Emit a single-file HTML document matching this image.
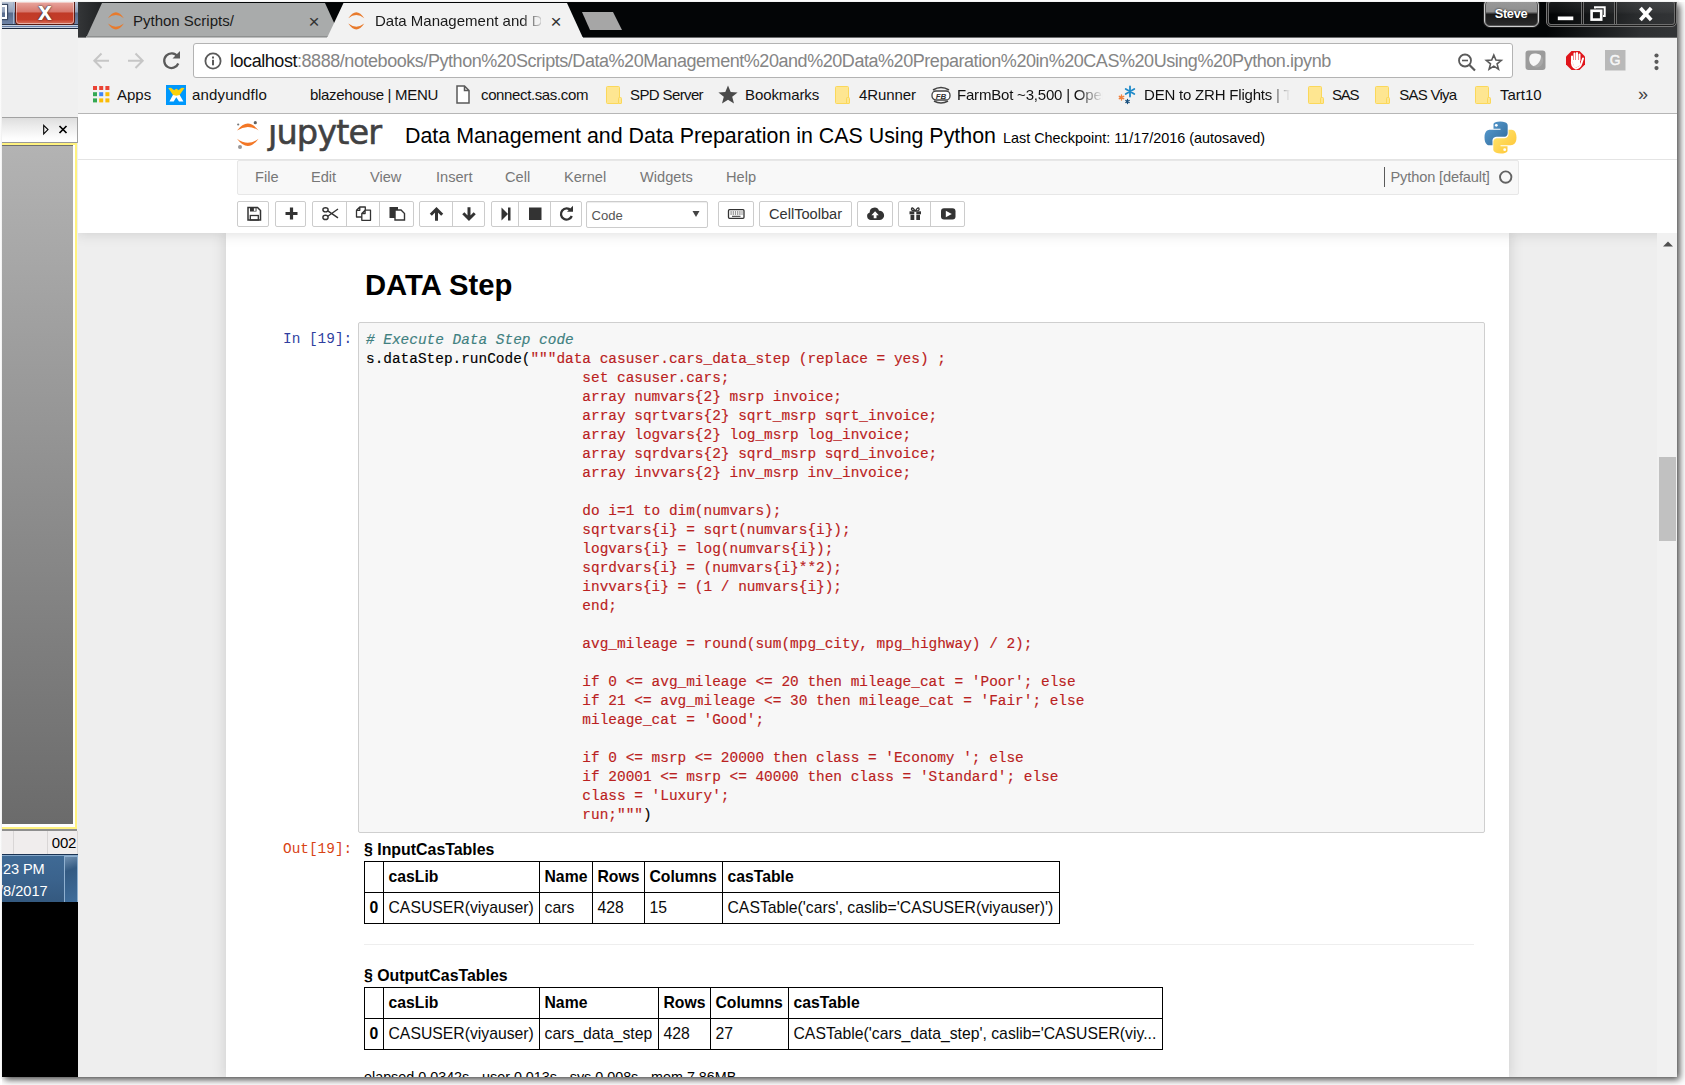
<!DOCTYPE html>
<html>
<head>
<meta charset="utf-8">
<title>Data Management and Data Preparation in CAS Using Python</title>
<style>
html,body{margin:0;padding:0;}
body{width:1685px;height:1085px;overflow:hidden;background:#fff;position:relative;font-family:"Liberation Sans",sans-serif;}
.abs{position:absolute;}
#frame{left:2px;top:2px;width:1675px;height:1075px;box-shadow:2px 2px 7px .5px rgba(0,0,0,.75);clip-path:inset(0 -10px -10px 0);background:#fff;}
/* left window */
#lw{left:2px;top:2px;width:76px;height:1075px;background:#f0f0f0;overflow:hidden;}
#lw-title{left:0;top:0;width:76px;height:26px;background:linear-gradient(#b9c3d3 0,#93a2bb 10px,#586b8b 11px,#6e83a6 22px,#2a3346 22px,#2a3346 23px,#c5d0e0 23px,#c5d0e0 24px,#6a82aa 24px,#6a82aa 25px,#c5d0e0 25px,#c5d0e0 26px);border-bottom:1px solid #1a2840;}
#lw-close{left:13px;top:0;width:58px;height:22px;border:1px solid #5b1a12;border-top:none;border-radius:0 0 4px 4px;background:linear-gradient(#e9a79f 0%,#d6766b 45%,#c03a27 50%,#c43c28 80%,#d9735f 100%);box-shadow:inset 0 0 0 1px rgba(255,255,255,.45);}
#lw-close span{left:0;width:58px;top:-5.500px;text-align:center;color:#fff;font:bold 25px "Liberation Sans",sans-serif;text-shadow:0 0 2px #333,0 0 1px #333;}
#lw-panelhead{left:0;top:115px;width:75px;height:24px;background:linear-gradient(#dedede,#ececec 35%,#fdfdfd 85%,#fff);border-top:1px solid #a2a2a2;border-right:1px solid #a2a2a2;border-bottom:1px solid #9a9a9a;}
#lw-pane{left:0;top:141px;width:75px;height:686px;background:#fff;border-bottom:2px solid #8f8f8f;}
#lw-pane b{position:absolute;left:0;top:0;width:73px;height:682px;border:2px solid #fff27f;border-left:none;}
#lw-pane i{position:absolute;left:0;top:1.500px;width:71px;height:678.500px;background:linear-gradient(#b3b3b3,#6b6b6b);border-top:1.500px solid #6e6e6e;}
#lw-num{left:0;top:829px;width:76px;height:23px;background:#f0eded;font-size:15px;color:#000;}
#lw-num i{position:absolute;top:0;width:1px;height:23px;background:#d9d6d6;}
#lw-task{left:0;top:852px;width:76px;height:48px;background:linear-gradient(#3f6a95,#3b638d 50%,#34597f);border-top:1.500px solid #1b3352;box-shadow:inset 0 1px 0 #86a8c9;color:#fff;font-size:14.600px;}
#lw-task i{position:absolute;left:62px;top:1px;width:12px;height:45px;border:1px solid #8fb0d0;background:linear-gradient(160deg,#6f8fb0 0%,#335a82 30%,#3f6d9b 100%);}
#lw-black{left:0;top:900px;width:76px;height:175px;background:#000;}
/* chrome */
#ch{left:78px;top:2px;width:1599px;height:1075px;background:#fff;overflow:hidden;}
#ch-title{left:0;top:0;width:1599px;height:36px;background:#030506;}
#ch-tool{left:0;top:35px;width:1599px;height:76px;background:#f2f2f2;border-bottom:1px solid #b6b6b6;}
.ui{font-family:"Liberation Sans",sans-serif;color:#111;white-space:nowrap;}

/* chrome titlebar */
#ch-title svg{position:absolute;left:0;top:0;}
.tabt{top:8.300px;font-size:15px;color:#1a1a1a;white-space:nowrap;overflow:hidden;height:22px;line-height:22px;}
.tabx{top:9px;font-size:19px;color:#333;line-height:22px;width:14px;text-align:center;}
#steve{left:1405.500px;top:-3px;width:53px;height:26px;border:1px solid #cfcfcf;border-radius:6px;background:linear-gradient(#9a9a9a 0%,#8f8f8f 45%,#1a1a1a 55%,#2b2b2b 100%);box-shadow:0 0 0 1px #222, inset 0 0 0 1px #555;color:#fff;font:bold 12.800px "Liberation Sans",sans-serif;text-align:center;line-height:27.200px;letter-spacing:-.3px;text-shadow:0 0 2px #000;}
#wc{left:1468px;top:-3px;width:129px;height:25.500px;border:1px solid #777;border-radius:5px;background:linear-gradient(rgba(255,255,255,.1) 0%,rgba(255,255,255,.04) 45%,rgba(255,255,255,0) 55%);box-shadow:inset 0 0 0 1px rgba(20,20,20,.9),inset 0 0 0 2px #6e6e6e;}
#wc i{position:absolute;top:0;width:3px;height:24px;background:linear-gradient(90deg,#6e6e6e 1px,#161616 1px,#161616 2px,#6e6e6e 2px);}
/* toolbar */
#urlbox{left:115px;top:6px;width:1318px;height:33px;border:1px solid #b3b3b3;border-radius:3px;background:#fff;}
#url{left:36px;top:1.400px;line-height:33px;font-size:18px;letter-spacing:-.45px;color:#858585;white-space:nowrap;}
#url b{font-weight:normal;color:#111;}
.bm{top:46px;height:24px;line-height:24px;font-size:15px;color:#111;white-space:nowrap;}
.fold{position:absolute;top:49px;left:0;width:12px;height:15.500px;background:#fee691;border:1.300px solid #fbd85a;border-radius:1.500px;margin-left:-1.200px;}
.fold:after{content:"";position:absolute;left:10.300px;top:9.800px;width:2px;height:5.500px;background:#fee691;border:1.200px solid #fbd85a;border-radius:1.500px 1.500px 1px 1px;}

/* jupyter header : coordinates relative to #page (abs x-78, abs y-114) */
#logo-t{left:190px;top:-.800px;font-family:"DejaVu Sans",sans-serif;font-size:33.600px;letter-spacing:-.9px;color:#414142;line-height:40px;-webkit-text-stroke:.55px #414142;}
#nbname{left:327px;top:8px;font-size:21.400px;line-height:28px;color:#000;white-space:nowrap;}
#ckpt{left:925px;top:12px;font-size:14.400px;line-height:24px;color:#000;white-space:nowrap;}
#menubar{left:159px;top:46px;width:1280px;height:33px;background:#f8f8f8;border:1px solid #e7e7e7;border-radius:2px;}
#menubar span{position:absolute;top:0;line-height:33px;font-size:14.625px;color:#777;}
#kern{position:absolute;left:1145.900px;top:6px;width:1px;height:20px;background:#5a5a5a;}
.tb{position:absolute;top:87px;height:24px;border:1px solid #ccc;border-radius:2px;background:#fff;}
.tb i{position:absolute;top:0;width:1px;height:24px;background:#ccc;}
.tb svg{position:absolute;top:0;}

/* notebook: coords relative to #nbc (abs x-226, abs y-233) */
#h1{left:139px;top:32px;font-size:29.250px;font-weight:bold;line-height:40px;color:#000;white-space:nowrap;}
.prompt{font-family:"Liberation Mono",monospace;font-size:14.430px;line-height:19.100px;white-space:pre;}
#inp{left:132px;top:89px;width:1125px;height:509px;border:1px solid #cfcfcf;border-radius:2px;background:#f7f7f7;}
#code{left:7px;top:7.700px;margin:0;font-family:"Liberation Mono",monospace;font-size:14.430px;line-height:19px;color:#000;white-space:pre;-webkit-text-stroke-width:.15px;}
#code .s{color:#ba2121;} #code .c{color:#408080;font-style:italic;}
.oh{left:138px;font-size:15.900px;font-weight:bold;line-height:22px;color:#000;white-space:nowrap;}
table.df{position:absolute;left:138px;border-collapse:collapse;table-layout:fixed;font-size:15.750px;color:#000;}
table.df td,table.df th{border:1px solid #000;padding:0 0 0 4.500px;height:30px;line-height:30px;text-align:left;white-space:nowrap;overflow:hidden;box-sizing:border-box;}
table.df td{font-weight:normal;color:#0a0a0a;}
/* page */
#page{left:0;top:112px;width:1599px;height:963px;background:#fff;overflow:hidden;}
#sb{left:1579px;top:231px;width:20px;height:844px;background:#f1f1f1;}
#site{left:0;top:119px;width:1579px;height:844px;background:#eee;}
#nbc{left:148px;top:0;width:1283px;height:844px;background:#fff;box-shadow:0 0 12px 1px rgba(87,87,87,.2);}
#hdr{left:0;top:0;width:1599px;height:119px;background:#fff;box-shadow:0 0 12px 1px rgba(87,87,87,.2);}
</style>
</head>
<body>
<div class="abs" style="left:0;top:0;width:1679px;height:2px;background:linear-gradient(#fff,#f0f0f0)"></div><div class="abs" style="left:0;top:0;width:2px;height:1079px;background:linear-gradient(90deg,#fff,#eee)"></div>
<div id="frame" class="abs"></div>

<!-- left background window -->
<div id="lw" class="abs">
  <div id="lw-title" class="abs"><div class="abs" style="left:-7px;top:3px;width:8px;height:10px;border:2px solid #fff;box-shadow:0 0 1px 1px #3b4a63"></div><div class="abs" style="left:11px;top:0;width:1px;height:22px;background:#9fb1cb"></div><div id="lw-close" class="abs"><span class="abs">x</span></div></div>
  <div id="lw-panelhead" class="abs"><svg class="abs" style="left:38px;top:4px" width="30" height="14" viewBox="40 122 30 14"><path d="M43.700,125.300 L48,129.600 L43.700,133.900Z" fill="none" stroke="#000" stroke-width="1.100"/><path d="M59.500,126 L66.500,133 M66.500,126 L59.500,133" stroke="#000" stroke-width="1.700"/></svg></div>
  <div id="lw-pane" class="abs"><b></b><i></i></div>
  <div id="lw-num" class="abs"><i style="left:11px"></i><i style="left:45px"></i><i style="left:75px"></i><span class="abs" style="right:2px;top:3px;letter-spacing:-.3px">002</span></div>
  <div id="lw-task" class="abs"><span class="abs" style="left:-3px;top:6px;letter-spacing:-.1px">:23 PM</span><span class="abs" style="left:-3px;top:28px">/8/2017</span><i></i></div>
  <div id="lw-black" class="abs"></div>
</div>

<!-- chrome window -->
<div id="ch" class="abs">
  <div id="ch-title" class="abs">
    <svg width="1599" height="36" viewBox="0 0 1599 36">
      <defs><linearGradient id="tg" x1="0" y1="0" x2="1" y2="0"><stop offset="0" stop-color="#343638"/><stop offset="1" stop-color="#030506"/></linearGradient></defs>
      <rect x="0" y="0" width="60" height="36" fill="url(#tg)"/>
      <linearGradient id="tg2" gradientUnits="userSpaceOnUse" x1="1480" y1="0" x2="1590" y2="40"><stop offset="0" stop-color="#030506"/><stop offset=".75" stop-color="#2e3032"/><stop offset="1" stop-color="#323436"/></linearGradient>
      <rect x="1440" y="0" width="159" height="36" fill="url(#tg2)"/>
      <polygon points="8,36 24,1 247,1 263,36" fill="#a9abab"/>
      <rect x="8" y="34" width="255" height="2" fill="#8e9090"/>
      <polygon points="504,10 535,10 544,28 512,28" fill="#a6a6a6"/>
      <polygon points="249,36 265.500,1 489,1 505,36" fill="#f2f2f2"/>
      <g fill="#e87a2c">
        <path d="M29.900,16.200 Q37.900,4.200 45.900,16.200 Q37.900,9.800 29.900,16.200Z"/><path d="M29.900,21.600 Q37.900,33.400 45.900,21.600 Q37.900,27.800 29.900,21.600Z"/>
        <path d="M270.300,16.200 Q278.300,4.200 286.300,16.200 Q278.300,9.800 270.300,16.200Z"/><path d="M270.300,21.600 Q278.300,33.400 286.300,21.600 Q278.300,27.800 270.300,21.600Z"/>
      </g>
    </svg>
    <div class="abs tabt ui" style="left:55px;width:150px">Python Scripts/</div>
    <div class="abs tabx" style="left:229px">×</div>
    <div class="abs tabt ui" style="left:297px;width:166px;-webkit-mask-image:linear-gradient(90deg,#000 146px,transparent 170px);mask-image:linear-gradient(90deg,#000 146px,transparent 170px)">Data Management and Da</div>
    <div class="abs tabx" style="left:471px">×</div>
    <div id="steve" class="abs">Steve</div>
    <div id="wc" class="abs"><i style="left:34px"></i><i style="left:67px"></i>
      <svg width="129" height="25" viewBox="0 0 129 25" style="position:absolute;left:-1.200px;top:0">
        <rect x="11.800" y="16.500" width="15.500" height="3.700" fill="#fff"/>
        <rect x="45.600" y="10.800" width="9.600" height="8.800" fill="none" stroke="#fff" stroke-width="2.600"/>
        <path d="M49,8.500 V7.200 H58.700 V16 H57" fill="none" stroke="#fff" stroke-width="2"/>
        <path d="M94.400,7.900 L105.200,20 M105.200,7.900 L94.400,20" stroke="#fff" stroke-width="3.700"/>
      </svg>
    </div>
  </div>
  <div id="ch-tool" class="abs"><div class="abs" style="left:0;top:0;width:8px;height:1px;background:#7b7c7d"></div><div class="abs" style="left:8px;top:0;width:241px;height:1px;background:#bcbdbd"></div><div class="abs" style="left:505px;top:0;width:1094px;height:1px;background:#6b6c6d"></div>
    <svg class="abs" style="left:0;top:0" width="1599" height="76" viewBox="78 37 1599 76">
      <g fill="none" stroke="#c6c6c6" stroke-width="2">
        <path d="M109,60.700 H94.500 M101.500,53.500 L94.300,60.700 L101.500,68"/>
        <path d="M128,60.700 H142.500 M135.500,53.500 L142.700,60.700 L135.500,68"/>
      </g>
      <path d="M177.500,56.500 A7.300,7.300 0 1 0 178.300,63.500" fill="none" stroke="#5a5a5a" stroke-width="2.3"/>
      <polygon points="172.500,58.500 180,58.500 180,51" fill="#5a5a5a"/>
    </svg>
    <div id="urlbox" class="abs">
      <svg class="abs" style="left:9px;top:7px" width="20" height="20" viewBox="0 0 20 20"><circle cx="10" cy="10" r="7.600" fill="none" stroke="#5a5a5a" stroke-width="1.800"/><rect x="9" y="8.800" width="2" height="5.500" fill="#5a5a5a"/><rect x="9" y="5.500" width="2" height="2" fill="#5a5a5a"/></svg>
      <div id="url" class="abs ui"><b>localhost</b>:8888/notebooks/Python%20Scripts/Data%20Management%20and%20Data%20Preparation%20in%20CAS%20Using%20Python.ipynb</div>
      <svg class="abs" style="left:1260px;top:5px" width="50" height="24" viewBox="1454 48 50 24">
        <circle cx="1465" cy="59.500" r="6" fill="none" stroke="#5a5a5a" stroke-width="1.800"/><path d="M1469.500,64 L1475,69.500" stroke="#5a5a5a" stroke-width="2.200"/><path d="M1462,59.500 H1468" stroke="#5a5a5a" stroke-width="1.600"/>
        <polygon points="1493.800,54 1495.900,59 1501.300,59.400 1497.100,62.900 1498.500,68.200 1493.800,65.200 1489.100,68.200 1490.500,62.900 1486.300,59.400 1491.700,59" fill="none" stroke="#5a5a5a" stroke-width="1.600" stroke-linejoin="miter"/>
      </svg>
    </div>
    <svg class="abs" style="left:1440px;top:10px" width="150" height="26" viewBox="1518 47 150 26">
      <rect x="1525.500" y="50.500" width="20" height="19.500" rx="3" fill="#9b9b9b"/>
      <circle cx="1536.400" cy="60.600" r="6.800" fill="#a8a8a8"/>
      <path d="M1529.300,58 Q1530,53 1536,53.600 Q1540,54 1541,55.800 Q1541,61 1537.500,64 Q1535,66.200 1533.200,66 Q1528.500,63 1529.300,58Z" fill="#f6f6f6"/>
      <polygon points="1571.500,51 1579.500,51 1585,56.500 1585,64.500 1579.500,70 1571.500,70 1566,64.500 1566,56.500" fill="#e0151b"/>
      <path d="M1572,61 V56.500 M1574.500,60 V53.500 M1577,60 V53 M1579.500,60.500 V54.500 M1572,60 Q1571,67 1576,68.500 Q1580,68 1581.500,63 L1583,58.500" fill="none" stroke="#fff" stroke-width="2" stroke-linecap="round"/>
      <path d="M1572.500,60 H1580 V65 Q1577,68.500 1573.500,66.500Z" fill="#fff"/>
      <rect x="1605" y="50" width="20.500" height="20.500" fill="#b9b9b9"/>
      <text x="1615.100" y="65.400" font-family="Liberation Sans, sans-serif" font-size="13.800" fill="#f6f6f6" stroke="#f6f6f6" stroke-width=".5" text-anchor="middle">G</text>
      <circle cx="1656.500" cy="55.500" r="2.100" fill="#5a5a5a"/><circle cx="1656.500" cy="61.800" r="2.100" fill="#5a5a5a"/><circle cx="1656.500" cy="68.100" r="2.100" fill="#5a5a5a"/>
    </svg>
    <svg class="abs" style="left:15px;top:49px" width="17" height="17" viewBox="0 0 17 17">
      <g fill="#ea4335"><rect x="0" y="0" width="4" height="4"/><rect x="6.200" y="0" width="4" height="4"/><rect x="12.400" y="0" width="4" height="4"/></g>
      <rect x="0" y="6.200" width="4" height="4" fill="#34a853"/><rect x="6.200" y="6.200" width="4" height="4" fill="#4285f4"/><rect x="12.400" y="6.200" width="4" height="4" fill="#fbbc05"/>
      <rect x="0" y="12.400" width="4" height="4" fill="#34a853"/><rect x="6.200" y="12.400" width="4" height="4" fill="#fbbc05"/><rect x="12.400" y="12.400" width="4" height="4" fill="#fbbc05"/>
    </svg>
    <div class="abs bm ui" style="left:39px;">Apps</div>
    <svg class="abs" style="left:88px;top:48px" width="20" height="20" viewBox="0 0 20 20"><rect width="20" height="20" fill="#0098fc"/><path d="M7.200,9.600 L13.400,9.600 L17.400,16.600 L13,16.600 L10.300,12.200 L7.700,16.600 L3.400,16.600Z" fill="#fff"/><path d="M2.200,3 L5,2.800 L8.200,5.200 Q10.300,2.200 12.400,5.200 L15.600,2.800 L18.500,3 L13.600,10 L10.300,10.800 L7,10Z" fill="#fbd20c"/></svg>
    <div class="abs bm ui" style="left:114px;letter-spacing:.15px">andyundflo</div>
    <div class="abs bm ui" style="left:232px;letter-spacing:-.3px">blazehouse | MENU</div>
    <svg class="abs" style="left:378px;top:48px" width="14" height="19" viewBox="0 0 14 19"><path d="M1,1 H8.500 L13,5.500 V18 H1Z M8.500,1 V5.500 H13" fill="#fff" stroke="#5a5a5a" stroke-width="1.500"/></svg>
    <div class="abs bm ui" style="left:403px;letter-spacing:-.37px">connect.sas.com</div>
    <i class="fold" style="left:529.6px"></i><div class="abs bm ui" style="left:552px;letter-spacing:-.62px">SPD Server</div>
    <svg class="abs" style="left:640px;top:48px" width="20" height="19" viewBox="0 0 20 19"><polygon points="10,0.500 12.700,7 19.600,7.400 14.200,11.800 16,18.500 10,14.700 4,18.500 5.800,11.800 0.400,7.400 7.300,7" fill="#4a4a4a"/></svg>
    <div class="abs bm ui" style="left:667px;letter-spacing:-.1px">Bookmarks</div>
    <i class="fold" style="left:758.0px"></i><div class="abs bm ui" style="left:781px;letter-spacing:-.1px">4Runner</div>
    <svg class="abs" style="left:853px;top:48px" width="20" height="20" viewBox="0 0 20 20"><path d="M2,5 Q10,0 18,5" fill="none" stroke="#444" stroke-width="1.600"/><path d="M3,16 Q10,20 17,16" fill="none" stroke="#444" stroke-width="1.600"/><rect x="1" y="6" width="18" height="9" rx="4" fill="#fff" stroke="#444" stroke-width="1.300"/><text x="10" y="13.500" font-family="Liberation Sans, sans-serif" font-size="8" font-weight="bold" font-style="italic" fill="#333" text-anchor="middle">FB</text></svg>
    <div class="abs bm ui" style="left:879px;width:146px;overflow:hidden;letter-spacing:-.2px;-webkit-mask-image:linear-gradient(90deg,#000 120px,transparent 146px);mask-image:linear-gradient(90deg,#000 120px,transparent 146px)">FarmBot ~3,500 | Open</div>
    <svg class="abs" style="left:1039px;top:48px" width="20" height="20" viewBox="0 0 20 20"><g stroke="#1f8ac9" stroke-width="1.800" stroke-linecap="round"><path d="M13,1.500 V11.500 M8.700,4 L17.300,9 M17.300,4 L8.700,9"/></g><g stroke="#f0803c" stroke-width="1.400" stroke-linecap="round"><path d="M4.500,10 V15 M2.300,11.300 L6.700,13.700 M6.700,11.300 L2.300,13.700"/></g><g stroke="#19507d" stroke-width="1.300" stroke-linecap="round"><path d="M10.500,14.500 V18.500 M8.800,15.500 L12.200,17.500 M12.200,15.500 L8.800,17.500"/></g></svg>
    <div class="abs bm ui" style="left:1066px;width:148px;overflow:hidden;letter-spacing:-.2px;-webkit-mask-image:linear-gradient(90deg,#000 125px,transparent 146px);mask-image:linear-gradient(90deg,#000 125px,transparent 146px)">DEN to ZRH Flights | Th</div>
    <i class="fold" style="left:1231.5px"></i><div class="abs bm ui" style="left:1254px;letter-spacing:-1.2px">SAS</div>
    <i class="fold" style="left:1298.3px"></i><div class="abs bm ui" style="left:1321.3px;letter-spacing:-.75px">SAS Viya</div>
    <i class="fold" style="left:1398.5px"></i><div class="abs bm ui" style="left:1422px;">Tart10</div>
    <div class="abs bm ui" style="left:1560px;font-size:18px;top:45px;color:#444">»</div>
  </div>
  <div id="page" class="abs">
    <div id="site" class="abs"><div id="nbc" class="abs">
      <div id="h1" class="abs">DATA Step</div>
      <div class="abs prompt" style="left:57px;top:97.200px;color:#303f9f">In [19]:</div>
      <div id="inp" class="abs"><pre id="code" class="abs"><span class="c"># Execute Data Step code</span>
s.dataStep.runCode(<span class="s">"""data casuser.cars_data_step (replace = yes) ;
                         set casuser.cars;
                         array numvars{2} msrp invoice;
                         array sqrtvars{2} sqrt_msrp sqrt_invoice;
                         array logvars{2} log_msrp log_invoice;
                         array sqrdvars{2} sqrd_msrp sqrd_invoice;
                         array invvars{2} inv_msrp inv_invoice;

                         do i=1 to dim(numvars);
                         sqrtvars{i} = sqrt(numvars{i});
                         logvars{i} = log(numvars{i});
                         sqrdvars{i} = (numvars{i}**2);
                         invvars{i} = (1 / numvars{i});
                         end;

                         avg_mileage = round(sum(mpg_city, mpg_highway) / 2);

                         if 0 &lt;= avg_mileage &lt;= 20 then mileage_cat = 'Poor'; else
                         if 21 &lt;= avg_mileage &lt;= 30 then mileage_cat = 'Fair'; else
                         mileage_cat = 'Good';

                         if 0 &lt;= msrp &lt;= 20000 then class = 'Economy '; else
                         if 20001 &lt;= msrp &lt;= 40000 then class = 'Standard'; else
                         class = 'Luxury';
                         run;"""</span>)</pre></div>
      <div class="abs prompt" style="left:57px;top:606.500px;color:#d84315">Out[19]:</div>
      <div class="abs oh" style="top:605.700px">§ InputCasTables</div>
      <table class="df" style="top:628px;width:696px"><colgroup><col style="width:19px"><col style="width:156px"><col style="width:53px"><col style="width:52px"><col style="width:78px"><col style="width:337px"></colgroup>
        <tr><th></th><th>casLib</th><th>Name</th><th>Rows</th><th>Columns</th><th>casTable</th></tr>
        <tr><th>0</th><td>CASUSER(viyauser)</td><td>cars</td><td>428</td><td>15</td><td>CASTable('cars', caslib='CASUSER(viyauser)')</td></tr>
      </table>
      <div class="abs" style="left:138px;top:711px;width:1110px;height:1px;background:#eee"></div>
      <div class="abs oh" style="top:732.200px">§ OutputCasTables</div>
      <table class="df" style="top:754px;width:799px"><colgroup><col style="width:19px"><col style="width:156px"><col style="width:119px"><col style="width:52px"><col style="width:78px"><col style="width:374px"></colgroup>
        <tr><th></th><th>casLib</th><th>Name</th><th>Rows</th><th>Columns</th><th>casTable</th></tr>
        <tr><th>0</th><td>CASUSER(viyauser)</td><td>cars_data_step</td><td>428</td><td>27</td><td>CASTable('cars_data_step', caslib='CASUSER(viy...</td></tr>
      </table>
      <div class="abs" style="left:138px;top:836px;font-size:14.350px;line-height:16px;color:#000;white-space:nowrap">elapsed 0.0342s · user 0.013s · sys 0.008s · mem 7.86MB</div>
    </div></div>
    <div id="hdr" class="abs">
      <svg class="abs" style="left:158px;top:4px" width="26" height="34" viewBox="0 0 26 34">
        <path d="M1,12.600 Q11.800,-1.400 22.600,12.600 Q11.800,5.200 1,12.600Z" fill="#f37726"/>
        <path d="M1,20.700 Q11.800,35.300 22.600,20.700 Q11.800,28.700 1,20.700Z" fill="#f37726"/>
        <circle cx="2.200" cy="6.500" r="1.100" fill="#767677"/><circle cx="19.300" cy="4.700" r="1.600" fill="#616262"/><circle cx="4" cy="29" r="2" fill="#989798"/>
      </svg>
      <div id="logo-t" class="abs">jupyter</div><div class="abs" style="left:189px;top:1px;width:11px;height:9.800px;background:#fff"></div>
      <div id="nbname" class="abs">Data Management and Data Preparation in CAS Using Python</div>
      <div id="ckpt" class="abs">Last Checkpoint: 11/17/2016 (autosaved)</div>
      <svg class="abs" style="left:1406px;top:7px" width="33" height="33" viewBox="0 0 33 33">
        <defs><linearGradient id="pyb" x1="0" y1="0" x2="1" y2="1"><stop offset="0" stop-color="#5a9fd4"/><stop offset="1" stop-color="#306998"/></linearGradient><linearGradient id="pyy" x1="0" y1="0" x2="1" y2="1"><stop offset="0" stop-color="#ffe873"/><stop offset="1" stop-color="#ffc331"/></linearGradient></defs>
        <path d="M16.200,0.500 C9,0.500 9.500,3.600 9.500,3.600 V7.800 H16.500 V8.800 H6.200 C6.200,8.800 0.500,8.200 0.500,16.400 C0.500,24.600 5.500,24.300 5.500,24.300 H8.500 V20 C8.500,20 8.300,15.800 12.600,15.800 H19.700 C19.700,15.800 23.700,15.900 23.700,11.900 V4.700 C23.700,4.700 24.300,0.500 16.200,0.500Z" fill="url(#pyb)"/>
        <circle cx="12.300" cy="4.300" r="1.400" fill="#fff"/>
        <path d="M16.800,32.500 C24,32.500 23.500,29.400 23.500,29.400 V25.200 H16.500 V24.200 H26.800 C26.800,24.200 32.500,24.800 32.500,16.600 C32.500,8.400 27.500,8.700 27.500,8.700 H24.500 V13 C24.500,13 24.700,17.200 20.400,17.200 H13.300 C13.300,17.200 9.300,17.100 9.300,21.100 V28.300 C9.300,28.300 8.700,32.500 16.800,32.500Z" fill="url(#pyy)"/>
        <circle cx="20.700" cy="28.700" r="1.400" fill="#fff"/>
      </svg>
      <div class="abs" style="left:0;top:45px;width:1599px;height:1px;background:#e4e4e4"></div>
      <div id="menubar" class="abs">
        <span style="left:17px">File</span><span style="left:73px">Edit</span><span style="left:132px">View</span><span style="left:198px">Insert</span><span style="left:267px">Cell</span><span style="left:326px">Kernel</span><span style="left:402px">Widgets</span><span style="left:488px">Help</span>
        <b id="kern"></b><span style="left:1152.5px;letter-spacing:-.14px">Python [default]</span>
        <svg class="abs" style="left:1259px;top:8px" width="17" height="17" viewBox="0 0 17 17"><circle cx="8.700" cy="8.100" r="5.700" fill="none" stroke="#626262" stroke-width="1.900"/></svg>
      </div>
      <!-- toolbar -->
      <div class="tb" style="left:159px;width:30px"><svg width="30" height="24" viewBox="237.500 202 30 24"><path d="M247.500,207.500 H257 L260,210.500 V220 H247.500Z" fill="none" stroke="#333" stroke-width="1.500"/><rect x="249.500" y="207.500" width="6.500" height="4" fill="#333"/><rect x="253.400" y="208.300" width="1.700" height="2.600" fill="#fff"/><rect x="249.800" y="215.500" width="8" height="4.500" fill="none" stroke="#333" stroke-width="1.300"/></svg></div>
      <div class="tb" style="left:197px;width:29px"><svg width="29" height="24" viewBox="275.500 202 29 24"><path d="M285,213.500 H297 M291,207.500 V219.500" stroke="#333" stroke-width="3.200"/></svg></div>
      <div class="tb" style="left:234px;width:100px"><i style="left:32.800px"></i><i style="left:66.200px"></i>
        <svg width="100" height="24" viewBox="312.500 202 100 24">
          <g fill="none" stroke="#333" stroke-width="1.400"><ellipse cx="325" cy="209.800" rx="2.600" ry="2.100"/><ellipse cx="325" cy="217.400" rx="2.600" ry="2.100"/><path d="M327.300,210.800 L337.500,217.800 M327.300,216.300 L337.500,209"/></g>
          <g fill="#fff" stroke="#333" stroke-width="1.300" stroke-linejoin="round"><path d="M359.300,207 H364.800 V217 H356 V210.300Z M359.300,207 V210.300 H356"/><path d="M364.600,210.200 H370 V220.300 H361.300 V213.500Z M364.600,210.200 V213.500 H361.300"/></g>
          <rect x="389" y="207" width="8.500" height="11" fill="#333"/><path d="M394.500,210 H400.500 L404,213.500 V220 H394.500Z" fill="#fff" stroke="#333" stroke-width="1.400"/>
        </svg></div>
      <div class="tb" style="left:341px;width:64px"><i style="left:32px"></i>
        <svg width="64" height="24" viewBox="419.500 202 64 24"><g fill="none" stroke="#333" stroke-width="3"><path d="M436,220.800 V209.500 M430.300,214.700 L436,209 L441.700,214.700"/><path d="M468.500,207.300 V218.500 M462.800,213.300 L468.500,219 L474.200,213.300"/></g></svg></div>
      <div class="tb" style="left:413px;width:89px"><i style="left:26px"></i><i style="left:58px"></i>
        <svg width="89" height="24" viewBox="491.500 202 89 24"><polygon points="501,207.500 507.500,214 501,220.500" fill="#333"/><rect x="507.500" y="207.500" width="2.500" height="13" fill="#333"/><rect x="528.500" y="207.500" width="12.500" height="12.500" fill="#333"/>
        <path d="M570.300,210.300 A5.600,5.600 0 1 0 571.300,216" fill="none" stroke="#333" stroke-width="2.300"/><polygon points="566.500,211.800 572.500,211.800 572.500,205.800" fill="#333"/></svg></div>
      <div class="tb" style="left:508px;width:120px;top:87px;height:25px;box-shadow:inset 0 1px 1px rgba(0,0,0,.075)"><span style="position:absolute;left:4.500px;top:1px;line-height:25px;font-size:13.100px;color:#555">Code</span><svg style="left:104px;top:8px" width="10" height="8" viewBox="0 0 10 8"><polygon points="1.500,1 8.500,1 5,7" fill="#444"/></svg></div>
      <div class="tb" style="left:640px;width:34px"><svg width="34" height="24" viewBox="718.500 202 34 24"><rect x="728" y="209.700" width="15.500" height="8.600" rx="1" fill="none" stroke="#333" stroke-width="1.300"/><path d="M730,212 H742 M730,214 H742" stroke="#333" stroke-width="1" stroke-dasharray="1.200,1"/><path d="M731.500,216.300 H740" stroke="#333" stroke-width="1"/></svg></div>
      <div class="tb" style="left:681.3px;width:90.500px"><span style="position:absolute;left:0;width:100%;text-align:center;line-height:24px;font-size:14.625px;color:#333">CellToolbar</span></div>
      <div class="tb" style="left:779px;width:34px"><svg width="34" height="24" viewBox="857.500 202 34 24"><path d="M870.500,220 A3.800,3.800 0 0 1 869.200,212.600 A4.800,4.800 0 0 1 878.500,210.800 A4.300,4.300 0 0 1 879.500,220Z" fill="#333"/><path d="M874.600,211.300 L878.300,215.300 H876 V218.300 H873.200 V215.300 H870.900Z" fill="#fff"/></svg></div>
      <div class="tb" style="left:820px;width:65px"><i style="left:31px"></i>
        <svg width="65" height="24" viewBox="898.500 202 65 24"><rect x="909" y="211.300" width="11.500" height="3" fill="#333"/><rect x="910" y="214.800" width="9.500" height="5.200" fill="#333"/><rect x="913.800" y="211.300" width="2" height="8.700" fill="#fff"/><path d="M914.800,211 Q911,205.500 911,209.500 Q911.500,211 914.800,211 Q918.500,211 918.600,209.500 Q918.500,205.500 914.800,211" fill="none" stroke="#333" stroke-width="1.300"/>
        <rect x="940.500" y="208.300" width="14.500" height="11.200" rx="3" fill="#333"/><polygon points="945.300,210.800 951.300,214 945.300,217.200" fill="#fff"/></svg></div>
    </div>
  </div>
  <div id="sb" class="abs"><svg class="abs" style="left:5px;top:7px" width="12" height="8" viewBox="0 0 12 8"><polygon points="1,6.500 6,1.500 11,6.500" fill="#505050"/></svg><div class="abs" style="left:2px;top:224px;width:17px;height:84px;background:#c1c1c1"></div></div>
</div>
</body>
</html>
